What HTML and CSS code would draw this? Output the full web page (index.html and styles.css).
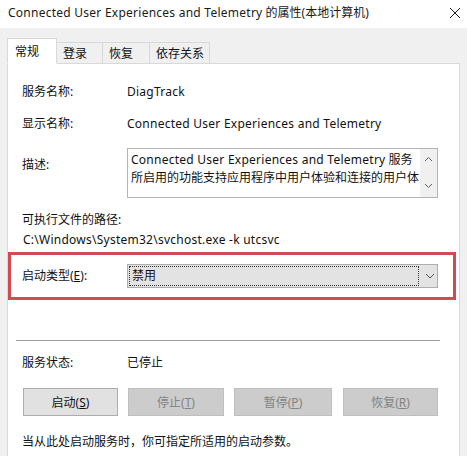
FILE: index.html
```html
<!DOCTYPE html>
<html lang="zh-CN">
<head>
  <meta charset="UTF-8">
  <title>Connected User Experiences and Telemetry 的属性(本地计算机)</title>
  <link rel="stylesheet" href="styles.css">
</head>
<body>
  <div class="window">
    <div class="titlebar">
      <span class="title"><span class="en">Connected User Experiences and Telemetry</span> 的属性(本地计算机)</span>
      <svg class="close" width="12" height="12" viewBox="0 0 12 12">
        <path d="M1 1L11 11M11 1L1 11" stroke="#222" stroke-width="1" fill="none"/>
      </svg>
    </div>

    <div class="tabs">
      <div class="tab active">常规</div>
      <div class="tab tab-login">登录</div>
      <div class="tab tab-recover">恢复</div>
      <div class="tab tab-deps">依存关系</div>
    </div>

    <div class="panel">
      <div class="row first">
        <div class="label">服务名称:</div>
        <div class="value en">DiagTrack</div>
      </div>

      <div class="row">
        <div class="label">显示名称:</div>
        <div class="value en">Connected User Experiences and Telemetry</div>
      </div>

      <div class="row desc-row">
        <div class="label desc-label">描述:</div>
        <div class="desc-box">
          <div class="desc-text">
            <div class="desc-line"><span class="en">Connected User Experiences and Telemetry</span> 服务</div>
            <div class="desc-line">所启用的功能支持应用程序中用户体验和连接的用户体</div>
          </div>
          <div class="scrollbar">
            <svg width="9" height="6" viewBox="0 0 9 6"><path d="M1 5L4.5 1.5L8 5" stroke="#606060" fill="none"/></svg>
            <svg width="9" height="6" viewBox="0 0 9 6"><path d="M1 1L4.5 4.5L8 1" stroke="#606060" fill="none"/></svg>
          </div>
        </div>
      </div>

      <div class="path-block">
        <div class="path-label">可执行文件的路径:</div>
        <div class="path-value en">C:\Windows\System32\svchost.exe -k utcsvc</div>
      </div>

      <div class="highlight">
        <div class="label">启动类型(<u>E</u>):</div>
        <div class="combo">
          <div class="combo-value">禁用</div>
          <svg class="combo-arrow" width="10" height="6" viewBox="0 0 10 6"><path d="M1 1L5 5L9 1" stroke="#555" fill="none"/></svg>
        </div>
      </div>

      <div class="separator"></div>

      <div class="row status-row">
        <div class="label">服务状态:</div>
        <div class="value">已停止</div>
      </div>

      <div class="buttons">
        <button class="btn">启动(<u>S</u>)</button>
        <button class="btn" disabled>停止(<u>T</u>)</button>
        <button class="btn" disabled>暂停(<u>P</u>)</button>
        <button class="btn" disabled>恢复(<u>R</u>)</button>
      </div>

      <div class="hint">当从此处启动服务时，你可指定所适用的启动参数。</div>
    </div>
  </div>
</body>
</html>
```

FILE: styles.css
```css
* {
  margin: 0;
  padding: 0;
  box-sizing: border-box;
}

body {
  width: 467px;
  height: 456px;
  overflow: hidden;
  background: #f0f0f0;
  font-family: "Noto Sans", "Noto Sans CJK SC", sans-serif;
  font-size: 12px;
  line-height: 16px;
  color: #111;
}

.en {
  letter-spacing: 0.25px;
}

.window {
  height: 100%;
}

.titlebar {
  height: 28px;
  background: #ffffff;
  display: flex;
  align-items: center;
  justify-content: space-between;
  padding: 0 6px 2px 8px;
}

.title {
  font-size: 12px;
  color: #1a1a1a;
  white-space: nowrap;
}

.tabs {
  display: flex;
  align-items: flex-end;
  height: 35px;
  padding-left: 7px;
  position: relative;
  z-index: 1;
}

.tab {
  height: 22px;
  margin-bottom: -1px;
  padding: 3px 0 0 6px;
  border: 1px solid #d9d9d9;
  border-left: none;
  background: #f0f0f0;
}

.tab.active {
  height: 26px;
  width: 50px;
  padding: 5px 0 0 7px;
  background: #ffffff;
  border-left: 1px solid #d9d9d9;
  border-bottom: 1px solid #ffffff;
}

.tab-login {
  width: 46px;
}

.tab-recover {
  width: 47px;
}

.tab-deps {
  width: 60px;
}

.panel {
  margin: 0 7px;
  height: 400px;
  background: #ffffff;
  border: 1px solid #d9d9d9;
  border-bottom: none;
}

.row {
  display: flex;
  padding-left: 14px;
  margin-top: 16px;
}

.row.first {
  margin-top: 20px;
}

.label {
  width: 105px;
  flex-shrink: 0;
}

.value {
  white-space: nowrap;
}

.desc-row {
  margin-top: 16px;
}

.desc-label {
  padding-top: 9px;
}

.desc-box {
  width: 311px;
  height: 50px;
  border: 1px solid #b4b4b4;
  display: flex;
}

.desc-text {
  flex: 1;
  padding: 2px 0 0 3px;
  line-height: 18px;
  white-space: nowrap;
}

.scrollbar {
  width: 17px;
  background: #f0f0f0;
  display: flex;
  flex-direction: column;
  align-items: center;
  justify-content: space-between;
  padding: 7px 0 8px;
}

.path-block {
  padding-left: 14px;
  margin-top: 14px;
}

.path-value {
  margin-top: 4px;
  padding-left: 1px;
}

.highlight {
  display: flex;
  align-items: center;
  margin: 4px 3px 0 0;
  height: 48px;
  border: 3px solid #cf4a52;
  padding-left: 11px;
}

.combo {
  width: 311px;
  height: 24px;
  margin-top: -1px;
  background: #e3e3e3;
  border: 1px solid #adadad;
  display: flex;
  align-items: center;
  padding: 1px;
}

.combo-value {
  width: 290px;
  height: 20px;
  border: 1px dotted #333;
  padding: 1px 0 0 2px;
}

.combo-arrow {
  margin-left: 6px;
}

.separator {
  margin: 40px 0 0 8px;
  width: 424px;
  border-top: 1px solid #a0a0a0;
}

.status-row {
  margin-top: 14px;
}

.buttons {
  display: grid;
  grid-template-columns: 95px 96px 98px 96px;
  column-gap: 10px;
  margin-top: 17px;
  padding-left: 15px;
}

.btn {
  height: 28px;
  font-family: inherit;
  font-size: 12px;
  color: #111;
  background: #e1e1e1;
  border: 1px solid #adadad;
}

.btn:nth-child(4) {
  margin-left: 1px;
}

.btn:disabled {
  background: #cccccc;
  border-color: #bfbfbf;
  color: #838383;
}

.hint {
  margin-top: 18px;
  padding-left: 14px;
}
```
